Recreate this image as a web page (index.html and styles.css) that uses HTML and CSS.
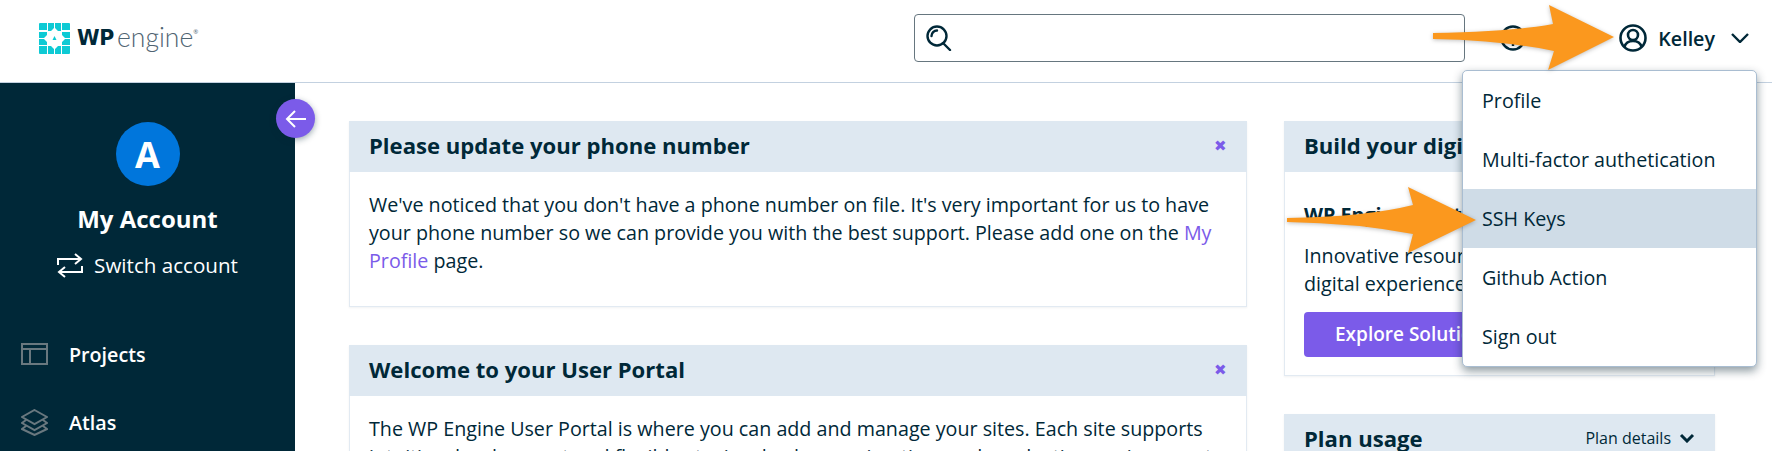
FILE: index.html
```html
<!DOCTYPE html>
<html lang="en">
<head>
    <meta charset="UTF-8">
    <title>WP Engine User Portal</title>
    <link rel="stylesheet" href="styles.css">
</head>
<body>
<div class="page">
    <header class="topbar">
        <a class="logo">
            <svg class="logo-mark" viewBox="0 0 31 31" width="31" height="31">
                <path fill="#0ecad4" d="M0 1q0-1 1-1h7v7H0zM9 0h6v5l-3 3H9zM16 0h6v8h-3l-3-3zM23 0h7q1 0 1 1v6h-8zM0 9h8v3l-3 3H0zM0 16h5l3 3v3H0zM23 9h8v6h-5l-3-3zM26 16h5v6h-8v-3zM0 23h8v8H1q-1 0-1-1zM9 23h3l3 3v5H9zM19 23h3v8h-6v-5zM23 23h8v7q0 1-1 1h-7z"/>
                <path fill="#0ecad4" d="M15.5 13l2 4h-4z"/>
            </svg>
            <span class="logo-wp">WP</span><span class="logo-engine">engine</span><span class="logo-reg">®</span>
        </a>
        <div class="search">
            <svg viewBox="0 0 28 26" width="28" height="26" fill="none" stroke="#002838" stroke-width="2.4">
                <circle cx="12" cy="11" r="9.5"/>
                <path d="M18 18l7 7M6.500 11a5.500 5.500 0 0 1 5.500-5.500" stroke-linecap="round"/>
            </svg>
        </div>
        <svg class="help" viewBox="0 0 26 26" width="26" height="26" fill="none" stroke="#002838" stroke-width="2.4">
            <circle cx="13" cy="13" r="11.500"/>
            <path d="M9 10a4 4 0 1 1 6 3.500c-1.500 1-2 1.500-2 3.500M13 19v2"/>
        </svg>
        <div class="user">
            <svg viewBox="0 0 28 28" width="28" height="28" fill="none" stroke="#002838" stroke-width="2.600">
                <circle cx="14" cy="14" r="12.500"/>
                <circle cx="14" cy="11" r="5"/>
                <path d="M5.500 23c1-4 4-6 8.500-6s7.500 2 8.500 6"/>
            </svg>
            <span class="user-name">Kelley</span>
            <svg viewBox="0 0 18 10" width="18" height="10" fill="none" stroke="#002838" stroke-width="2.400">
                <path d="M1 1l8 8 8-8"/>
            </svg>
        </div>
    </header>

    <div class="body-row">
        <aside class="sidebar">
            <button class="collapse">
                <svg viewBox="0 0 22 20" width="22" height="20" fill="none" stroke="#fff" stroke-width="2">
                    <path d="M21 10H2M10 2l-8 8 8 8"/>
                </svg>
            </button>
            <div class="avatar">A</div>
            <div class="account-name">My Account</div>
            <div class="switch">
                <svg viewBox="0 0 26 25" width="26" height="25" fill="none" stroke="#fff" stroke-width="2">
                    <path d="M1 12V6h23M18 1l6 5-6 5M25 13v6H2M8 14l-6 5 6 5"/>
                </svg>
                Switch account
            </div>
            <nav class="nav">
                <a class="nav-item">
                    <svg viewBox="0 0 27 22" width="27" height="22" fill="none" stroke="#69787f" stroke-width="2">
                        <path d="M1 1h25v20H1zM1 6h25M9 6v15"/>
                    </svg>
                    Projects
                </a>
                <a class="nav-item">
                    <svg viewBox="0 0 27 27" width="27" height="27" fill="none" stroke="#69787f" stroke-width="2">
                        <path d="M13.500 1L26 8l-12.500 7L1 8zM5 11l-4 3 12.500 7L26 14l-4-3M5 17l-4 3 12.500 6L26 20l-4-3"/>
                    </svg>
                    Atlas
                </a>
            </nav>
        </aside>

        <main class="content">
            <div class="col-main">
                <section class="card card-phone">
                    <div class="card-head">
                        <h2>Please update your phone number</h2>
                        <span class="close">✖</span>
                    </div>
                    <div class="card-body">
                        <p>We've noticed that you don't have a phone number on file. It's very important for us to have your phone number so we can provide you with the best support. Please add one on the <a class="link">My Profile</a> page.</p>
                    </div>
                </section>
                <section class="card">
                    <div class="card-head">
                        <h2>Welcome to your User Portal</h2>
                        <span class="close">✖</span>
                    </div>
                    <div class="card-body">
                        <p>The WP Engine User Portal is where you can add and manage your sites. Each site supports intuitive development and flexible staging, backups, migration, and production environments.</p>
                    </div>
                </section>
            </div>
            <div class="col-side">
                <section class="card card-build">
                    <div class="card-head">
                        <h2>Build your digital experience</h2>
                    </div>
                    <div class="card-body card-body-build">
                        <h3>WP Engine Solutions</h3>
                        <p>Innovative resources to help you build digital experiences that perform.</p>
                        <a class="btn">Explore Solutions</a>
                    </div>
                </section>
                <section class="card">
                    <div class="card-head">
                        <h2>Plan usage</h2>
                        <span class="plan-details">Plan details
                            <svg viewBox="0 0 16 10" width="16" height="10" fill="none" stroke="#002838" stroke-width="3">
                                <path d="M2 2l6 6 6-6"/>
                            </svg>
                        </span>
                    </div>
                </section>
            </div>
        </main>
    </div>

    <ul class="menu">
        <li>Profile</li>
        <li>Multi-factor authetication</li>
        <li class="active">SSH Keys</li>
        <li>Github Action</li>
        <li>Sign out</li>
    </ul>

    <svg class="callout callout-user" viewBox="0 0 190 75" width="190" height="75">
        <path d="M3 33Q80 32 123 24L119 5 184 37 118 70 124 51Q70 40 3 39Z"/>
    </svg>
    <svg class="callout callout-ssh" viewBox="0 0 195 70" width="195" height="70">
        <path d="M2 33Q80 32 128 20L123 2 191 35 123 68 128 49Q70 38 2 37Z"/>
    </svg>
</div>
</body>
</html>
```

FILE: styles.css
```css
* {
    box-sizing: border-box;
}

html, body {
    margin: 0;
    padding: 0;
    height: 100%;
    overflow: hidden;
    background: #fff;
}

body, h2, h3, p, ul, li {
    margin: 0;
    padding: 0;
    font-family: "Open Sans", "Liberation Sans", sans-serif;
    color: #002838;
}

.page {
    position: relative;
    width: 1772px;
    height: 451px;
    overflow: hidden;
    background: #fff;
}

.topbar {
    height: 83px;
    display: flex;
    align-items: center;
    padding: 0 23px 6px 39px;
    border-bottom: 1px solid #c3d1e0;
}

.logo {
    display: flex;
    align-items: center;
}

.logo-mark {
    margin-right: 7px;
}

.logo-wp {
    font-family: "DejaVu Sans", sans-serif;
    font-weight: 700;
    font-size: 20.5px;
    letter-spacing: -0.3px;
    margin-right: 3px;
}

.logo-engine {
    font-family: Lato, sans-serif;
    font-weight: 300;
    font-size: 26.5px;
    color: #4f6472;
    margin-top: -3px;
}

.logo-reg {
    font-size: 6px;
    color: #4f6472;
    margin-bottom: 12px;
}

.search {
    width: 551px;
    height: 48px;
    margin-left: auto;
    padding-left: 10px;
    display: flex;
    align-items: center;
    border: 1px solid #66767f;
    border-radius: 4px;
}

.help {
    margin-left: 35px;
}

.user {
    display: flex;
    align-items: center;
    margin-left: 93px;
}

.user-name {
    font-size: 19.7px;
    font-weight: 600;
    margin: 0 16px 0 11px;
}

.body-row {
    display: flex;
    height: 368px;
}

.sidebar {
    position: relative;
    width: 295px;
    flex-shrink: 0;
    padding-top: 39px;
    display: flex;
    flex-direction: column;
    align-items: center;
    background: #002838;
    color: #fff;
}

.sidebar > * {
    flex-shrink: 0;
}

.collapse {
    position: absolute;
    top: 16px;
    right: -20px;
    width: 39px;
    height: 39px;
    padding: 0;
    display: flex;
    align-items: center;
    justify-content: center;
    border: none;
    border-radius: 50%;
    background: #7b5be9;
    box-shadow: 0 2px 6px rgba(0, 40, 56, 0.4);
}

.avatar {
    width: 64px;
    height: 64px;
    display: flex;
    align-items: center;
    justify-content: center;
    border-radius: 50%;
    background: #0076dc;
    font-size: 36px;
    font-weight: 700;
}

.account-name {
    margin-top: 15px;
    font-size: 24px;
    font-weight: 700;
    line-height: 36px;
}

.switch {
    margin-top: 13px;
    display: flex;
    align-items: center;
    gap: 11px;
    font-size: 20.6px;
    line-height: 30px;
}

.nav {
    align-self: stretch;
    margin-top: 40px;
    padding-left: 21px;
}

.nav-item {
    height: 68px;
    display: flex;
    align-items: center;
    gap: 21px;
    font-size: 19.7px;
    font-weight: 600;
}

.content {
    flex: 1;
    display: flex;
    gap: 37px;
    padding: 38px 57px 0 54px;
}

.col-main {
    width: 898px;
    flex-shrink: 0;
}

.col-side {
    width: 431px;
    flex-shrink: 0;
}

.card {
    margin-bottom: 38px;
    background: #fff;
    border: 1px solid #e2eaf2;
    border-top: none;
    box-shadow: 0 1px 2px rgba(0, 40, 56, 0.06);
}

.card-phone {
    height: 186px;
}

.card-build {
    height: 255px;
}

.card-head {
    height: 51px;
    margin: 0 -1px;
    padding: 0 20px 4px;
    display: flex;
    align-items: center;
    justify-content: space-between;
    background: #dee8f1;
}

.card-head h2 {
    font-size: 22.1px;
    font-weight: 700;
    white-space: nowrap;
}

.close {
    font-size: 15px;
    color: #7b5be9;
}

.card-body {
    padding: 19px 19px;
}

.card-body p {
    font-size: 19.7px;
    line-height: 28px;
}

.card-body-build {
    padding-top: 29px;
}

.card-body h3 {
    font-size: 19.7px;
    font-weight: 700;
    line-height: 28px;
    margin-bottom: 13px;
}

.link {
    color: #7b5be9;
}

.btn {
    display: inline-block;
    margin-top: 14px;
    padding: 0 31px;
    height: 45px;
    line-height: 45px;
    border-radius: 4px;
    background: #7b5be9;
    color: #fff;
    font-size: 19px;
    font-weight: 600;
}

.plan-details {
    display: flex;
    align-items: center;
    gap: 8px;
    font-size: 16px;
}

.menu {
    position: absolute;
    top: 70px;
    left: 1462px;
    width: 295px;
    list-style: none;
    background: #fff;
    border: 1px solid #a9bdd1;
    border-radius: 5px;
    box-shadow: 0 4px 10px rgba(0, 30, 45, 0.45);
    overflow: hidden;
}

.menu li {
    height: 59px;
    padding-left: 19px;
    display: flex;
    align-items: center;
    font-size: 19.7px;
}

.menu .active {
    background: #cfdce7;
}

.callout {
    position: absolute;
    fill: #fb981e;
    filter: drop-shadow(0 1px 2px rgba(0, 0, 0, 0.25));
}

.callout-user {
    left: 1430px;
    top: 0;
}

.callout-ssh {
    left: 1285px;
    top: 185px;
}
```
